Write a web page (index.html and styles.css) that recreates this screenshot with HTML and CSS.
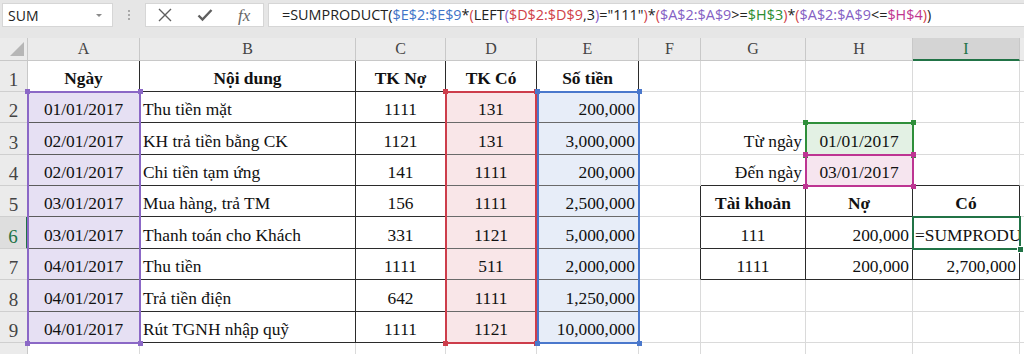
FILE: index.html
```html
<!DOCTYPE html>
<html lang="vi">
<head>
    <meta charset="UTF-8">
    <meta name="viewport" content="width=device-width, initial-scale=1.0">
    <title>SUMPRODUCT</title>
    <link rel="stylesheet" href="styles.css">
</head>
<body>
    <div class="topbar">
        <div class="namebox"><span>SUM</span><span class="caret"></span></div>
        <div class="grip"><i></i><i></i><i></i></div>
        <div class="fbuttons">
            <svg width="14" height="14" viewBox="0 0 14 14"><path d="M1 1L13 13M13 1L1 13" stroke="#5f5f5f" stroke-width="1.4" fill="none"/></svg>
            <svg width="16" height="14" viewBox="0 0 16 14"><path d="M1.5 7.5L5.5 11.5L14.5 2" stroke="#5f5f5f" stroke-width="2.4" fill="none"/></svg>
            <span class="fx">fx</span>
        </div>
        <div class="formula">=SUMPRODUCT(<span class="rb">$E$2:$E$9</span>*<span class="rr">(</span>LEFT<span class="rp">(</span><span class="rr">$D$2:$D$9</span>,3<span class="rp">)</span>="111"<span class="rr">)</span>*<span class="rr">(</span><span class="rp">$A$2:$A$9</span>&gt;=<span class="rg">$H$3</span><span class="rr">)</span>*<span class="rr">(</span><span class="rp">$A$2:$A$9</span>&lt;=<span class="rm">$H$4</span><span class="rr">)</span>)</div>
    </div>

    <div class="sheet">
        <div class="grid">
            <div class="c hd corner"></div>
            <div class="c hd">A</div>
            <div class="c hd">B</div>
            <div class="c hd">C</div>
            <div class="c hd">D</div>
            <div class="c hd">E</div>
            <div class="c hd">F</div>
            <div class="c hd">G</div>
            <div class="c hd">H</div>
            <div class="c hd hsel">I</div>
            <div class="c hd"></div>

            <div class="c rh">1</div>
            <div class="c t b ce">Ngày</div>
            <div class="c t b ce">Nội dung</div>
            <div class="c t b ce">TK Nợ</div>
            <div class="c t b ce">TK Có</div>
            <div class="c t b ce">Số tiền</div>
            <div class="c"></div>
            <div class="c"></div>
            <div class="c"></div>
            <div class="c"></div>
            <div class="c"></div>

            <div class="c rh">2</div>
            <div class="c t ce fa">01/01/2017</div>
            <div class="c t">Thu tiền mặt</div>
            <div class="c t ce">1111</div>
            <div class="c t ce fd">131</div>
            <div class="c t ri fe">200,000</div>
            <div class="c"></div>
            <div class="c"></div>
            <div class="c"></div>
            <div class="c"></div>
            <div class="c"></div>

            <div class="c rh">3</div>
            <div class="c t ce fa">02/01/2017</div>
            <div class="c t">KH trả tiền bằng CK</div>
            <div class="c t ce">1121</div>
            <div class="c t ce fd">131</div>
            <div class="c t ri fe">3,000,000</div>
            <div class="c"></div>
            <div class="c ri">Từ ngày</div>
            <div class="c ce fg">01/01/2017</div>
            <div class="c"></div>
            <div class="c"></div>

            <div class="c rh">4</div>
            <div class="c t ce fa">02/01/2017</div>
            <div class="c t">Chi tiền tạm ứng</div>
            <div class="c t ce">141</div>
            <div class="c t ce fd">1111</div>
            <div class="c t ri fe">200,000</div>
            <div class="c"></div>
            <div class="c ri bb">Đến ngày</div>
            <div class="c ce fm bb">03/01/2017</div>
            <div class="c bb"></div>
            <div class="c"></div>

            <div class="c rh">5</div>
            <div class="c t ce fa">03/01/2017</div>
            <div class="c t">Mua hàng, trả TM</div>
            <div class="c t ce">156</div>
            <div class="c t ce fd">1111</div>
            <div class="c t ri fe">2,500,000</div>
            <div class="c br"></div>
            <div class="c t b ce">Tài khoản</div>
            <div class="c t b ce">Nợ</div>
            <div class="c t b ce">Có</div>
            <div class="c"></div>

            <div class="c rh rsel">6</div>
            <div class="c t ce fa">03/01/2017</div>
            <div class="c t">Thanh toán cho Khách</div>
            <div class="c t ce">331</div>
            <div class="c t ce fd">1121</div>
            <div class="c t ri fe">5,000,000</div>
            <div class="c br"></div>
            <div class="c t ce">111</div>
            <div class="c t ri">200,000</div>
            <div class="c t edit">=SUMPRODUCT(</div>
            <div class="c"></div>

            <div class="c rh">7</div>
            <div class="c t ce fa">04/01/2017</div>
            <div class="c t">Thu tiền</div>
            <div class="c t ce">1111</div>
            <div class="c t ce fd">511</div>
            <div class="c t ri fe">2,000,000</div>
            <div class="c br"></div>
            <div class="c t ce">1111</div>
            <div class="c t ri">200,000</div>
            <div class="c t ri">2,700,000</div>
            <div class="c"></div>

            <div class="c rh">8</div>
            <div class="c t ce fa">04/01/2017</div>
            <div class="c t">Trả tiền điện</div>
            <div class="c t ce">642</div>
            <div class="c t ce fd">1111</div>
            <div class="c t ri fe">1,250,000</div>
            <div class="c"></div>
            <div class="c"></div>
            <div class="c"></div>
            <div class="c"></div>
            <div class="c"></div>

            <div class="c rh">9</div>
            <div class="c t ce fa">04/01/2017</div>
            <div class="c t">Rút TGNH nhập quỹ</div>
            <div class="c t ce">1111</div>
            <div class="c t ce fd">1121</div>
            <div class="c t ri fe">10,000,000</div>
            <div class="c"></div>
            <div class="c"></div>
            <div class="c"></div>
            <div class="c"></div>
            <div class="c"></div>

            <div class="c rh">10</div>
            <div class="c"></div>
            <div class="c"></div>
            <div class="c"></div>
            <div class="c"></div>
            <div class="c"></div>
            <div class="c"></div>
            <div class="c"></div>
            <div class="c"></div>
            <div class="c"></div>
            <div class="c"></div>
        </div>

        <!-- range highlights drawn over the cells -->
        <div class="marks">
            <div class="rng ra"><i></i><i></i><i></i><i></i></div>
            <div class="rng rd"><i></i><i></i><i></i><i></i></div>
            <div class="rng re"><i></i><i></i><i></i><i></i></div>
            <div class="rng rh3"><i></i><i></i><i></i><i></i></div>
            <div class="rng rh4"><i></i><i></i><i></i><i></i></div>
            <div class="act"></div>
        </div>
    </div>
</body>
</html>
```

FILE: styles.css
```css
body {
    margin: 0;
    width: 1024px;
    height: 354px;
    overflow: hidden;
    background-color: #fff;
    font-family: "Liberation Serif", "Times New Roman", serif;
}

/* formula bar */
.topbar {
    height: 38px;
    box-sizing: border-box;
    padding: 3px 0 0 2px;
    background-color: #e6e6e6;
    display: flex;
    align-items: flex-start;
    font-family: "Open Sans", "Noto Sans", sans-serif;
}
.namebox {
    width: 111px;
    height: 24px;
    box-sizing: border-box;
    border: 1px solid #d6d6d6;
    background-color: #fff;
    display: flex;
    align-items: center;
    justify-content: space-between;
    padding: 0 10px 0 5px;
    font-size: 14px;
    color: #222;
}
.caret {
    width: 0;
    height: 0;
    border-left: 3px solid transparent;
    border-right: 3px solid transparent;
    border-top: 3px solid #8a8a8a;
}
.grip {
    width: 32px;
    height: 24px;
    display: flex;
    flex-direction: column;
    align-items: center;
    justify-content: center;
    gap: 2px;
}
.grip i {
    width: 2px;
    height: 2px;
    background-color: #a9a9a9;
}
.fbuttons {
    width: 119px;
    height: 24px;
    box-sizing: border-box;
    border: 1px solid #d6d6d6;
    background-color: #fff;
    display: flex;
    align-items: center;
    padding-left: 12px;
    gap: 25px;
}
.fx {
    font-family: "Liberation Serif", serif;
    font-style: italic;
    font-size: 17px;
    color: #666;
    line-height: 1;
}
.formula {
    flex: 1;
    height: 24px;
    margin-left: 4px;
    box-sizing: border-box;
    border: 1px solid #d6d6d6;
    border-right: none;
    background-color: #fff;
    padding-left: 13px;
    font-size: 14.4px;
    line-height: 22px;
    color: #222;
    white-space: nowrap;
    overflow: hidden;
}
.rb { color: #3f74c8; }
.rr { color: #d03f48; }
.rp { color: #8460c4; }
.rg { color: #2c8c2f; }
.rm { color: #c0358f; }

/* sheet */
.sheet {
    position: relative;
}
.grid,
.marks {
    display: grid;
    grid-template-columns: 28px 112px 216px 90px 91px 102px 62px 105px 107px 107px 1fr;
    grid-template-rows: 23px 31px 31px 32px 31px 31px 32px 31px 32px 31px 31px;
}
.marks {
    position: absolute;
    top: 0;
    left: 0;
    right: 0;
    bottom: 0;
    pointer-events: none;
}
.c {
    box-sizing: border-box;
    border-right: 1px solid #dadada;
    border-bottom: 1px solid #dadada;
    display: flex;
    align-items: flex-end;
    padding: 0 3px 3px;
    font-size: 17.4px;
    line-height: 20px;
    color: #111;
    white-space: nowrap;
    overflow: hidden;
}
.hd {
    background-color: #ebebeb;
    border-color: #c8c8c8;
    justify-content: center;
    align-items: center;
    padding: 0;
    font-size: 16px;
    color: #444;
}
.corner {
    justify-content: flex-end;
    align-items: flex-end;
    padding: 0 3px 4px 0;
}
.corner::after {
    content: "";
    width: 14px;
    height: 14px;
    background-color: #b6b6b6;
    clip-path: polygon(100% 0, 100% 100%, 0 100%);
}
.rh {
    background-color: #ebebeb;
    border-color: #cfcfcf;
    border-right-color: #c8c8c8;
    justify-content: center;
    padding: 0;
    font-size: 19px;
    line-height: 22px;
    color: #444;
}
.hsel {
    background-color: #d4d4d4;
    color: #217346;
    border-bottom: 2px solid #217346;
}
.rsel {
    background-color: #dedede;
    color: #217346;
    border-right: 2px solid #217346;
}

.t {
    border-right-color: #2b2b2b;
    border-bottom-color: #2b2b2b;
}
.br { border-right-color: #2b2b2b; }
.bb { border-bottom-color: #2b2b2b; }
.b { font-weight: bold; }
.ce { justify-content: center; }
.ri { justify-content: flex-end; }
.edit { padding-left: 2px; }

.fa { background-color: #e6e0f3; border-bottom-color: #5c5c5c; }
.fd { background-color: #f9e6e8; border-bottom-color: #6a6a6a; }
.fe { background-color: #e7edf8; border-bottom-color: #6a6a6a; }
.fg { background-color: #e3f1e4; }
.fm { background-color: #f6e5ef; }

/* range highlights */
.rng {
    margin: -1px;
    border: 2px solid currentColor;
    position: relative;
}
.rng i {
    position: absolute;
    width: 5px;
    height: 5px;
    background-color: currentColor;
}
.rng i:nth-child(1) { top: -4px; left: -4px; }
.rng i:nth-child(2) { top: -4px; right: -4px; }
.rng i:nth-child(3) { bottom: -4px; left: -4px; }
.rng i:nth-child(4) { bottom: -4px; right: -4px; }
.ra { grid-column: 2; grid-row: 3 / 11; color: #8b68c6; }
.rd { grid-column: 5; grid-row: 3 / 11; color: #cd3d4b; margin-right: 0; }
.re { grid-column: 6; grid-row: 3 / 11; color: #4a78cc; margin-left: 0; }
.rh3 { grid-column: 9; grid-row: 4; color: #2f8f3a; }
.rh4 { grid-column: 9; grid-row: 5; color: #bd3592; }
.act {
    grid-column: 10;
    grid-row: 7;
    margin: -1px;
    border: 2px solid #217346;
    position: relative;
}
.act::after {
    content: "";
    position: absolute;
    right: -5px;
    bottom: -5px;
    width: 5px;
    height: 5px;
    background-color: #217346;
    border: 1px solid #fff;
}
```
